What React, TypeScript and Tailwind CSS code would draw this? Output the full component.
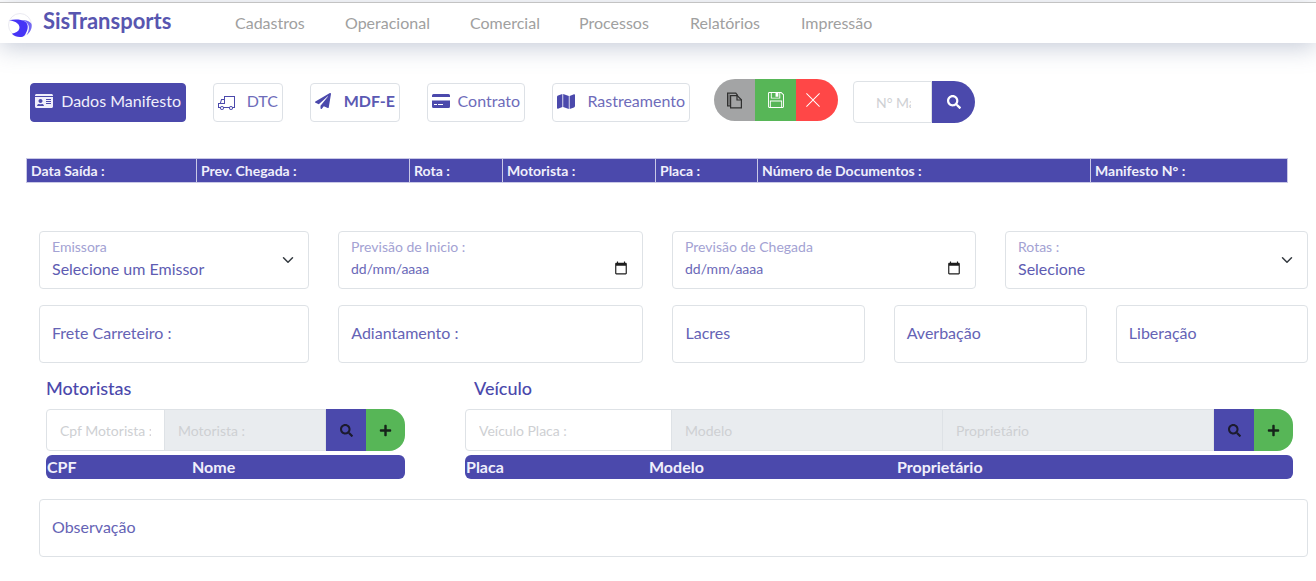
import type { ReactNode } from "react";
import { FaIdCard, FaPaperPlane, FaSearch, FaPlus } from "react-icons/fa";
import { TfiTruck, TfiSave, TfiClose } from "react-icons/tfi";

const menu = ["Cadastros", "Operacional", "Comercial", "Processos", "Relatórios", "Impressão"];

const menuWidths = ["w-[110px]", "w-[125px]", "w-[109px]", "w-[111px]", "w-[111px]", "w-[111px]"];

const summary = [
  { label: "Data Saída :", width: "w-[170px]" },
  { label: "Prev. Chegada :", width: "w-[213px]" },
  { label: "Rota :", width: "w-[93px]" },
  { label: "Motorista :", width: "w-[153px]" },
  { label: "Placa :", width: "w-[102px]" },
  { label: "Número de Documentos :", width: "w-[333px]" },
  { label: "Manifesto N° :", width: "" },
];

function Logo() {
  return (
    <svg viewBox="0 0 26 26" className="size-[26px]" aria-hidden="true">
      <circle cx="13" cy="13" r="11.5" fill="#fff" stroke="#e4e4ee" strokeWidth="0.8" />
      <path d="M15 8c4 .1 8.200 1.200 9.500 4 .9 4-1.300 8.500-4.900 11.200 2.200-4 3.200-8.200 1.200-11.300-1.200-1.800-3.200-3.200-5.800-3.900Z" fill="#7367f3" />
      <path d="M2.200 8.200c5-1.100 11.800-1 15.800 1.200 3.800 2.700 3.400 7.300.6 12.400-.7 1.500-1.800 2.600-3 2.900-4 .9-7.800-.2-10.800-3 3.600-.6 6.700-2.200 7.500-5C13.500 12.700 9.500 9.300 2.200 8.200Z" fill="#4634f6" />
    </svg>
  );
}

function CardIcon() {
  return (
    <svg viewBox="0 0 18 14" className="h-[14px] w-[18px]" fill="currentColor" aria-hidden="true">
      <path d="M1.500 0h15A1.500 1.500 0 0 1 18 1.500V3H0V1.500A1.500 1.500 0 0 1 1.500 0Z" />
      <path fillRule="evenodd" d="M0 6.500h18v6a1.500 1.500 0 0 1-1.500 1.500h-15A1.500 1.500 0 0 1 0 12.500Zm2 3.500v1h3v-1Zm4 0v1h5v-1Z" />
    </svg>
  );
}

function MapIcon() {
  return (
    <svg viewBox="0 0 18 15" className="h-[15px] w-[18px]" fill="currentColor" aria-hidden="true">
      <path d="M0 3Q0 2 1 1.600L5.400 0v13L1 14.800Q0 15 0 14Z" />
      <path d="M6.200 0 11.800 2v13L6.200 13Z" />
      <path d="M12.600 2 17 .200Q18 0 18 1v11q0 1-1 1.400L12.600 15Z" />
    </svg>
  );
}

function FilesIcon() {
  return (
    <svg viewBox="0 0 17 17" className="size-[17px]" fill="none" stroke="currentColor" strokeWidth="1.200" aria-hidden="true">
      <path d="M4.600 3.600h6.600l4.200 4.200v8h-10.800Z" />
      <path d="M11 3.800v4.200h4.200" />
      <path d="M4.200 13.800H1.600V1.200h8.200l2 2.400" />
      <path d="M3.100 2.400v10.500" strokeWidth="0.700" />
    </svg>
  );
}

function Tab({ icon, children, width, active, strong }: { icon: ReactNode; children: ReactNode; width: string; active?: boolean; strong?: boolean }) {
  return (
    <button
      type="button"
      className={`flex h-[39px] items-center justify-between rounded border px-1 pb-[3px] text-[16px] whitespace-nowrap ${width} ${
        active ? "border-[#4b49ac] bg-[#4b49ac] text-[#f0effb]" : "border-[#dde1e6] bg-white text-[#4b49ac]"
      }`}
    >
      {icon}
      <span className={active ? "" : strong ? "font-bold text-[#5b59b3]" : "text-[#6e6cba]"}>{children}</span>
    </button>
  );
}

function Chevron() {
  return (
    <svg viewBox="0 0 16 16" className="pointer-events-none size-3 shrink-0" fill="none" stroke="#343a40" strokeWidth="2" strokeLinecap="round" strokeLinejoin="round" aria-hidden="true">
      <path d="m2 5 6 6 6-6" />
    </svg>
  );
}

function CalendarIcon() {
  return (
    <svg viewBox="0 0 24 24" className="size-[14px]" fill="#1d1d1d" aria-hidden="true">
      <path d="M20 3h-1V1h-2v2H7V1H5v2H4c-1.100 0-2 .9-2 2v16c0 1.100.9 2 2 2h16c1.100 0 2-.9 2-2V5c0-1.100-.9-2-2-2zm0 18H4V8h16v13z" />
    </svg>
  );
}

const box = "flex h-[58px] items-center rounded border border-[#dee2e6] bg-white";

const stack = "flex min-w-0 flex-1 flex-col pb-1";

const floatingLabel = "text-[14px] leading-5 text-[#a3a2d3]";

function SelectField({ id, label, option }: { id: string; label: string; option: string }) {
  return (
    <div className={`${box} pr-[14px] pl-3`}>
      <div className={stack}>
        <label htmlFor={id} className={floatingLabel}>{label}</label>
        <select id={id} className="h-[22px] w-full appearance-none bg-transparent text-[16px] text-[#5e5cb2] outline-none">
          <option>{option}</option>
        </select>
      </div>
      <Chevron />
    </div>
  );
}

function DateField({ id, label }: { id: string; label: string }) {
  return (
    <div className={`${box} px-3`}>
      <div className={stack}>
        <label htmlFor={id} className={floatingLabel}>{label}</label>
        <div className="flex h-[22px] items-center">
          <input id={id} placeholder="dd/mm/aaaa" className="min-w-0 flex-1 bg-transparent text-[14px] outline-none placeholder:text-[#6a68b8]" />
          <button type="button" aria-label="Abrir calendário" className="px-[2px]"><CalendarIcon /></button>
        </div>
      </div>
    </div>
  );
}

function TextField({ id, label, className = "" }: { id: string; label: string; className?: string }) {
  return (
    <div className={`${box} gap-2 px-3 ${className}`}>
      <label htmlFor={id} className="pb-[2px] text-[16px] whitespace-nowrap text-[#6563b5]">{label}</label>
      <input id={id} className="h-full min-w-0 flex-1 bg-transparent outline-none" />
    </div>
  );
}

function GroupButtons() {
  return (
    <>
      <button type="button" aria-label="Pesquisar" className="flex w-10 shrink-0 items-center justify-center bg-[#4b49ac] text-[#1c1b2e]"><FaSearch className="size-[13px]" /></button>
      <button type="button" aria-label="Adicionar" className="flex w-[39px] shrink-0 items-center justify-center rounded-r-2xl bg-[#57b657] text-[#16241a]"><FaPlus className="size-[13px]" /></button>
    </>
  );
}

const groupInput = "min-w-0 border border-[#dee2e6] px-[13px] text-[14px] outline-none placeholder:text-[#ced0d3]";

export default function App() {
  return (
    <div className="min-h-screen bg-white font-['Lato',sans-serif] text-[#4b49ac]">
      <header className="mt-0.5 flex h-[41px] items-center border-t border-[#c3c3c3] bg-white pl-[7px] shadow-[0_4px_24px_rgba(100,116,150,0.38)]">
        <a href="#" className="flex w-[228px] items-center gap-[10px] text-[22px] font-bold text-[#5856b0]">
          <span className="pt-1"><Logo /></span>
          <span className="pb-[6px]">SisTransports</span>
        </a>
        <nav className="flex text-[16px] text-[#a0a0a0]">
          {menu.map((item, i) => (
            <a key={item} href="#" className={menuWidths[i]}>{item}</a>
          ))}
        </nav>
      </header>

      <main>
        <div className="mt-[36px] flex h-[44px] items-start pl-[30px]">
          <div className="mt-1 flex gap-[27px]">
            <Tab active width="w-[156px]" icon={<FaIdCard className="size-[18px]" />}>Dados Manifesto</Tab>
            <Tab width="w-[70px]" icon={<TfiTruck className="size-[17px]" />}>DTC</Tab>
            <Tab strong width="w-[90px]" icon={<FaPaperPlane className="size-4" />}>MDF-E</Tab>
            <Tab width="w-[98px]" icon={<CardIcon />}>Contrato</Tab>
            <Tab width="w-[138px]" icon={<MapIcon />}>Rastreamento</Tab>
          </div>
          <div className="ml-6 flex h-[42px] overflow-hidden rounded-full">
            <button type="button" aria-label="Novo" className="flex w-[41px] items-center justify-center bg-[#a3a4a5] text-[#303030]"><FilesIcon /></button>
            <button type="button" aria-label="Salvar" className="flex w-[41px] items-center justify-center bg-[#57b657] text-white"><TfiSave className="size-4" /></button>
            <button type="button" aria-label="Cancelar" className="flex w-[42px] items-center bg-[#ff4747] pl-[9px] text-white"><TfiClose className="size-4" /></button>
          </div>
          <div className="ml-[15px] flex h-[42px] self-end">
            <input aria-label="N° Manifesto" placeholder="N° Manifesto" className="w-[79px] rounded-l border border-[#dee2e6] pr-[20px] pl-[22px] text-[14px] outline-none placeholder:text-[#ced0d3]" />
            <button type="button" aria-label="Buscar manifesto" className="flex w-[43px] items-center justify-center rounded-r-full bg-[#4b49ac] text-white"><FaSearch className="size-[14px]" /></button>
          </div>
        </div>

        <div className="mt-[35px] mr-7 ml-[26px]">
          <table className="w-full table-fixed border-collapse bg-[#4b49ac] text-left text-[14px] text-[#f0effb]">
            <thead>
              <tr className="h-6">
                {summary.map((c) => (
                  <th key={c.label} className={`border border-[#c9c8e6] px-1 py-0 font-bold ${c.width}`}>{c.label}</th>
                ))}
              </tr>
            </thead>
          </table>
        </div>

        <form className="mt-[48px] pr-2 pb-6 pl-[39px]">
          <div className="grid grid-cols-[minmax(0,270fr)_minmax(0,305fr)_minmax(0,304fr)_minmax(0,303fr)] gap-x-[29px]">
            <SelectField id="emissora" label="Emissora" option="Selecione um Emissor" />
            <DateField id="inicio" label="Previsão de Inicio :" />
            <DateField id="chegada" label="Previsão de Chegada" />
            <SelectField id="rotas" label="Rotas :" option="Selecione" />
          </div>
          <div className="mt-4 grid grid-cols-[minmax(0,270fr)_minmax(0,305fr)_minmax(0,192fr)_minmax(0,193fr)_minmax(0,192fr)] gap-x-[29px]">
            <TextField id="frete" label="Frete Carreteiro :" />
            <TextField id="adiantamento" label="Adiantamento :" />
            <TextField id="lacres" label="Lacres" />
            <TextField id="averbacao" label="Averbação" />
            <TextField id="liberacao" label="Liberação" />
          </div>

          <div className="mt-[11px] grid grid-cols-[minmax(0,359fr)_minmax(0,828fr)] gap-x-[60px] pr-[15px] pl-[7px]">
            <section>
              <h2 className="h-[35px] text-[18px] leading-7 font-medium">Motoristas</h2>
              <div className="flex h-[42px]">
                <input aria-label="Cpf Motorista" placeholder="Cpf Motorista :" className={`${groupInput} w-[119px] rounded-l`} />
                <input aria-label="Motorista" placeholder="Motorista :" readOnly className={`${groupInput} -ml-px flex-1 bg-[#e9ecef]`} />
                <GroupButtons />
              </div>
              <table className="mt-1 w-full table-fixed overflow-hidden rounded-md bg-[#4b49ac] text-left text-[16px] text-[#f0effb]">
                <thead>
                  <tr className="h-6">
                    <th className="w-[145px] py-0 pl-px leading-6 font-bold">CPF</th>
                    <th className="py-0 pl-px leading-6 font-bold">Nome</th>
                  </tr>
                </thead>
              </table>
            </section>
            <section>
              <h2 className="h-[35px] pl-[9px] text-[18px] leading-7 font-medium">Veículo</h2>
              <div className="flex h-[42px]">
                <input aria-label="Veículo Placa" placeholder="Veículo Placa :" className={`${groupInput} w-[207px] rounded-l`} />
                <input aria-label="Modelo" placeholder="Modelo" readOnly className={`${groupInput} -ml-px flex-1 bg-[#e9ecef]`} />
                <input aria-label="Proprietário" placeholder="Proprietário" readOnly className={`${groupInput} -ml-px flex-1 bg-[#e9ecef]`} />
                <GroupButtons />
              </div>
              <table className="mt-1 w-full table-fixed overflow-hidden rounded-md bg-[#4b49ac] text-left text-[16px] text-[#f0effb]">
                <thead>
                  <tr className="h-6">
                    <th className="w-[183px] py-0 pl-px leading-6 font-bold">Placa</th>
                    <th className="w-[248px] py-0 pl-px leading-6 font-bold">Modelo</th>
                    <th className="py-0 pl-px leading-6 font-bold">Proprietário</th>
                  </tr>
                </thead>
              </table>
            </section>
          </div>

          <TextField id="observacao" label="Observação" className="mt-5" />
        </form>
      </main>
    </div>
  );
}
